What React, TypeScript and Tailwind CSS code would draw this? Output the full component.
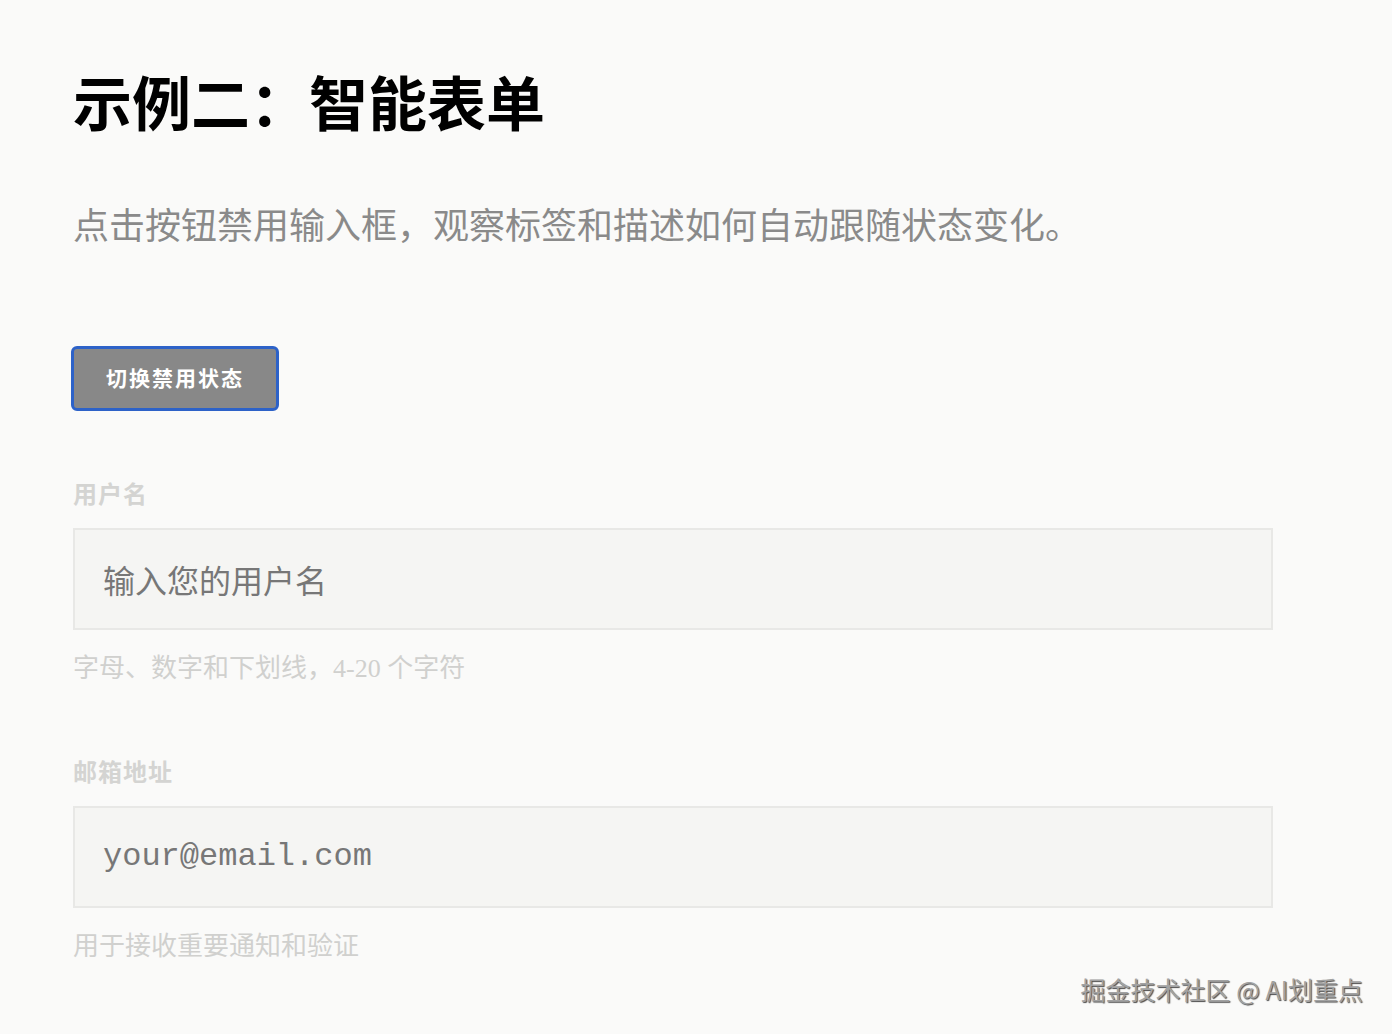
const sans = "font-['Noto_Sans_CJK_SC','Noto_Sans',sans-serif]";
const serif = "font-['Liberation_Serif','Noto_Sans_CJK_SC',serif]";

const Field: React.FC<{
  label: string;
  placeholder: string;
  hint: string;
  mono?: boolean;
}> = ({ label, placeholder, hint, mono }) => (
  <div className="mb-[68px]">
    <label className={`${sans} block text-[24px] font-bold tracking-[1px] leading-[1.3] text-[#d4d4d2]`}>
      {label}
    </label>
    <div className="mt-[20px] flex h-[102px] w-[1200px] items-center border-2 border-[#e8e8e6] bg-[#f5f5f3] px-[28px]">
      <span
        className={
          mono
            ? "font-['Liberation_Mono',monospace] text-[32px] text-[#777777]"
            : `${sans} text-[32px] text-[#777777]`
        }
      >
        {placeholder}
      </span>
    </div>
    <p className={`${serif} mt-[21px] text-[26px] leading-[1.4] text-[#d0d0ce]`}>{hint}</p>
  </div>
);

export default function App() {
  return (
    <div className="relative min-h-[1034px] w-full overflow-hidden bg-[#fafaf9]">
      <main className="px-[73px] pt-[66px]">
        <h1 className={`${sans} text-[59px] font-bold leading-[1.2] text-black`}>
          示例二：智能表单
        </h1>
        <p className={`${serif} mt-[67px] text-[36px] leading-[1.3] text-[#8a8a8a]`}>
          点击按钮禁用输入框，观察标签和描述如何自动跟随状态变化。
        </p>
        <button
          type="button"
          className={`${sans} -ml-[2px] mt-[95px] flex h-[65px] w-[208px] items-center justify-center rounded-[6px] border-[3px] border-[#2d62c8] bg-[#888888] text-[21px] font-bold tracking-[2px] text-white`}
        >
          切换禁用状态
        </button>
        <div className="mt-[66px]">
          <Field label="用户名" placeholder="输入您的用户名" hint="字母、数字和下划线，4-20 个字符" />
          <Field label="邮箱地址" placeholder="your@email.com" hint="用于接收重要通知和验证" mono />
        </div>
      </main>
      <div
        className={`${sans} absolute bottom-[26px] right-[29px] text-[25px] text-[#a2a2a2] [text-shadow:1px_1px_1px_#4a4a4a]`}
      >
        掘金技术社区 @ AI划重点
      </div>
    </div>
  );
}
